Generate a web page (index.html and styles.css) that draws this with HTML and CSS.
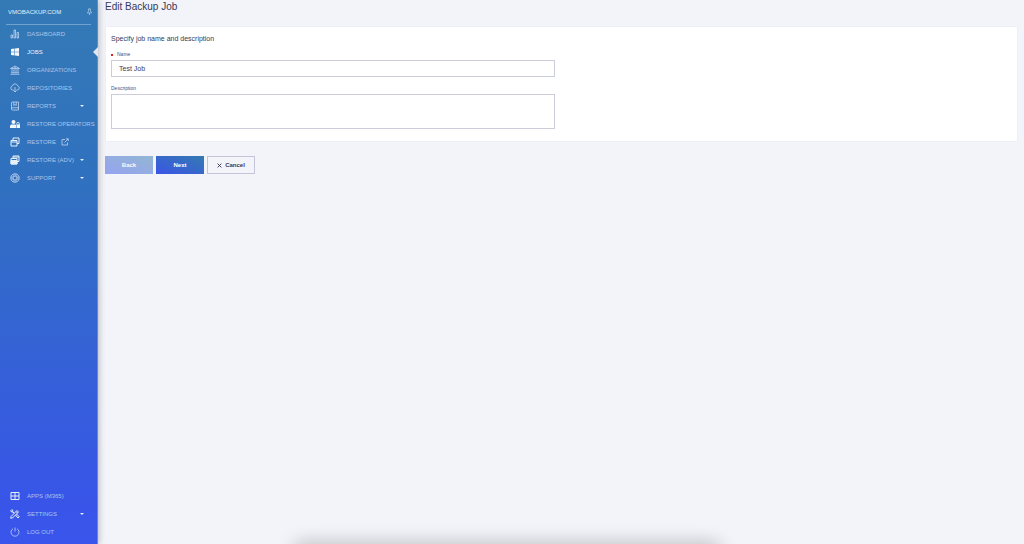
FILE: index.html
```html
<!DOCTYPE html>
<html lang="en">
<head>
    <meta charset="UTF-8">
    <meta name="viewport" content="width=device-width, initial-scale=1.0">
    <title>Edit Backup Job</title>
    <link rel="stylesheet" href="styles.css">
</head>
<body>
    <aside class="sidebar">
        <header class="brand">
            <span>VMOBACKUP.COM</span>
            <button type="button" class="pin" aria-label="Pin menu">
                <svg viewBox="0 0 16 16"><path d="M5 1h6M6 1v5l-3 4h10l-3-4V1M8 10v5"/></svg>
            </button>
        </header>

        <nav class="menu">
            <a href="#" class="item">
                <svg class="icon" viewBox="0 0 20 20"><path d="M2 12h3v6H2zM8 2h3v16H8zM14 7h3v11h-3z"/></svg>
                <span>DASHBOARD</span>
            </a>
            <a href="#" class="item active">
                <svg class="icon solid" viewBox="0 0 20 20"><path d="M2 4l7-1v6.500H2zM10 2.800L18 2v7.500h-8zM2 10.500h7V17l-7-1zM10 10.500h8V18l-8-1z"/></svg>
                <span>JOBS</span>
            </a>
            <a href="#" class="item">
                <svg class="icon" viewBox="0 0 20 20"><path d="M1 7l9-5 9 5zM4 8v7M8 8v7M12 8v7M16 8v7M2 15.500h16M1 18.500h18M8 5.500h4"/></svg>
                <span>ORGANIZATIONS</span>
            </a>
            <a href="#" class="item">
                <svg class="icon" viewBox="0 0 20 20"><path d="M7 14H5a4 4 0 0 1-.5-7.800 5.600 5.600 0 0 1 10.800-.6A4.300 4.300 0 0 1 15 14h-2M10 8v10M7 15l3 3 3-3"/></svg>
                <span>REPOSITORIES</span>
            </a>
            <a href="#" class="item">
                <svg class="icon" viewBox="0 0 20 20"><path d="M5 2h12v16H5a2 2 0 0 1-2-2V4a2 2 0 0 1 2-2zM3 15.500a2 2 0 0 1 2-2h12M7.500 2v7L10 7l2.500 2V2"/></svg>
                <span>REPORTS</span>
                <i class="caret"></i>
            </a>
            <a href="#" class="item">
                <svg class="icon solid" viewBox="0 0 20 20"><circle cx="7" cy="6" r="4"/><path d="M0 18v-3c0-3 2-4 4-4h6c1 0 2 .5 2 1v6zM13 11V9a3 3 0 0 1 6 0v2h1v7h-7v-7zm1.500 0h3V9a1.500 1.500 0 0 0-3 0z"/></svg>
                <span>RESTORE OPERATORS</span>
            </a>
            <a href="#" class="item">
                <svg class="icon bold" viewBox="0 0 20 20"><path d="M2 7h12v11H2zM2 10h12M6 6V2h12v11h-4"/></svg>
                <span>RESTORE</span>
                <svg class="external" viewBox="0 0 16 16"><path d="M8 3H2v11h11V9M10 1.500h4.500V6M14 2L7 9"/></svg>
            </a>
            <a href="#" class="item">
                <svg class="icon bold" viewBox="0 0 20 20"><path class="filled" d="M2 11h12v7H2z"/><path d="M2 7h12v11H2zM6 6V2h12v11h-4M6 4h12"/></svg>
                <span>RESTORE (ADV)</span>
                <i class="caret"></i>
            </a>
            <a href="#" class="item">
                <svg class="icon" viewBox="0 0 20 20"><circle cx="10" cy="10" r="8.500"/><circle cx="10" cy="10" r="4"/><path d="M8 2v4.500M12 2v4.500M8 13.500V18M12 13.500V18M2 8h4.500M2 12h4.500M13.500 8H18M13.500 12H18"/></svg>
                <span>SUPPORT</span>
                <i class="caret"></i>
            </a>
        </nav>

        <nav class="menu menu-bottom">
            <a href="#" class="item">
                <svg class="icon bold" viewBox="0 0 20 20"><path d="M2 3h16v14H2zM10 3v14M2 10h16"/></svg>
                <span>APPS (M365)</span>
            </a>
            <a href="#" class="item">
                <svg class="icon bold" viewBox="0 0 20 20"><path d="M2 15L14 3l3 3L5 18l-3.500.5zM12 5l3 3M8 8L5.500 5.500 6 3 3.500 1.500 1.500 3.500 3 6h2.500L8 8.500M11 12l5 6 2.500-2.500L13 10"/></svg>
                <span>SETTINGS</span>
                <i class="caret"></i>
            </a>
            <a href="#" class="item">
                <svg class="icon" viewBox="0 0 20 20"><path d="M6 3.500a8 8 0 1 0 8 0M10 1v8"/></svg>
                <span>LOG OUT</span>
            </a>
        </nav>
    </aside>

    <main class="content">
        <h1>Edit Backup Job</h1>

        <form id="jobForm">
            <section class="panel">
                <h2>Specify job name and description</h2>

                <div class="field">
                    <label for="name" class="required">Name</label>
                    <input type="text" id="name" value="Test Job" required>
                </div>

                <div class="field">
                    <label for="description">Description</label>
                    <textarea id="description"></textarea>
                </div>
            </section>

            <div class="actions">
                <button type="button" class="btn btn-primary" disabled>Back</button>
                <button type="submit" class="btn btn-primary">Next</button>
                <button type="button" class="btn btn-outline">
                    <svg viewBox="0 0 8 8"><path d="M1 1l6 6M7 1L1 7"/></svg>
                    Cancel
                </button>
            </div>
        </form>
    </main>

    <div class="bottom-shadow"></div>
</body>
</html>
```

FILE: styles.css
```css
* {
    box-sizing: border-box;
}

body {
    margin: 0;
    display: flex;
    min-height: 100vh;
    overflow: hidden;
    font-family: "Liberation Sans", Arial, sans-serif;
    background-color: #f3f4f9;
    color: #36395a;
}

button, input, textarea {
    font-family: inherit;
}

/* Sidebar */
.sidebar {
    position: relative;
    flex: none;
    display: flex;
    flex-direction: column;
    width: 98px;
    padding-bottom: 3px;
    background: linear-gradient(#347ab5, #3070c0 35%, #3562d6 65%, #3855e8 92%, #3a55ec);
    border-right: 1px solid #6585dc;
    box-shadow: 1px 0 6px rgba(40, 45, 70, 0.3);
    color: #fff;
}

.brand {
    display: flex;
    justify-content: space-between;
    align-items: center;
    height: 25px;
    margin: 0 6px;
    padding-left: 2px;
    border-bottom: 1px solid #70a2d0;
    font-size: 6px;
    color: #e6f0fa;
}

.pin {
    display: flex;
    margin-right: -2px;
    padding: 0;
    border: none;
    background: none;
    cursor: pointer;
}

.pin svg {
    width: 7px;
    height: 8px;
    fill: none;
    stroke: #bdd5ec;
    stroke-width: 1.5;
}

.menu-bottom {
    margin-top: auto;
}

.item {
    position: relative;
    display: flex;
    align-items: center;
    height: 18px;
    padding-left: 10px;
    font-size: 6px;
    line-height: 8px;
    color: #a9c5ec;
    text-decoration: none;
    white-space: nowrap;
}

.item.active {
    color: #e6f0fa;
}

/* Notch that points from the content to the open page */
.item.active::after {
    content: "";
    position: absolute;
    right: -1px;
    top: 4px;
    border: 5px solid transparent;
    border-left: none;
    border-right-color: #e4e6ef;
}

.icon {
    width: 10px;
    height: 10px;
    margin-right: 7px;
    fill: none;
    stroke: #c9daf4;
    stroke-width: 1.5;
}

.icon.bold {
    stroke: #e6f0fa;
    stroke-width: 2;
}

.icon.solid {
    fill: #f4f8fd;
    fill-rule: evenodd;
    stroke: none;
}

.icon .filled {
    fill: #e6f0fa;
}

.external {
    width: 8px;
    height: 8px;
    margin-left: 5px;
    fill: none;
    stroke: #c9daf4;
    stroke-width: 1.5;
}

.caret {
    margin-left: auto;
    margin-right: 13px;
    border: 2px solid transparent;
    border-top-color: #e6f0fa;
    border-bottom: none;
}

/* Content */
.content {
    flex: 1;
    padding: 0 6px 0 7px;
}

h1 {
    margin: 0 0 13px;
    font-size: 10px;
    line-height: 13px;
    font-weight: normal;
}

.panel {
    padding: 7px 5px 12px;
    background-color: #fff;
    border: 1px solid #eff0f7;
}

h2 {
    margin: 0 0 7px;
    font-size: 7px;
    line-height: 9px;
    font-weight: normal;
}

.field {
    width: 50%;
    max-width: 444px;
    margin-bottom: 7px;
}

.field:last-child {
    margin-bottom: 0;
}

label {
    display: block;
    margin-bottom: 2px;
    font-size: 5px;
    line-height: 8px;
    color: #4b5080;
}

.required::before {
    content: "";
    display: inline-block;
    width: 2px;
    height: 2px;
    margin-right: 4px;
    background-color: #e02020;
    vertical-align: middle;
}

input, textarea {
    display: block;
    width: 100%;
    padding: 0 7px;
    border: 1px solid #cccdda;
    border-radius: 0;
    background-color: #fff;
    font-size: 7px;
    color: #36395a;
}

input {
    height: 17px;
}

textarea {
    height: 35px;
    resize: none;
}

/* Buttons */
.actions {
    display: flex;
    gap: 3px;
    margin-top: 14px;
}

.btn {
    display: flex;
    justify-content: center;
    align-items: center;
    gap: 3px;
    width: 48px;
    height: 18px;
    padding: 0;
    border: none;
    font-size: 6px;
    font-weight: bold;
    cursor: pointer;
}

.btn-primary {
    background: linear-gradient(to top right, #3a55e8, #347ab0);
    color: #fff;
}

.btn-primary:disabled {
    opacity: 0.5;
    cursor: default;
}

.btn-outline {
    border: 1px solid #c3c6d8;
    background: none;
    color: #36395a;
}

.btn-outline svg {
    width: 5px;
    height: 5px;
    fill: none;
    stroke: currentColor;
    stroke-width: 1.5;
}

/* Soft shadow along the lower edge of the window */
.bottom-shadow {
    position: fixed;
    left: 29%;
    right: 30%;
    bottom: -12px;
    height: 10px;
    border-radius: 10px;
    box-shadow: 0 0 18px 4px rgba(0, 0, 0, 0.22);
}
```
